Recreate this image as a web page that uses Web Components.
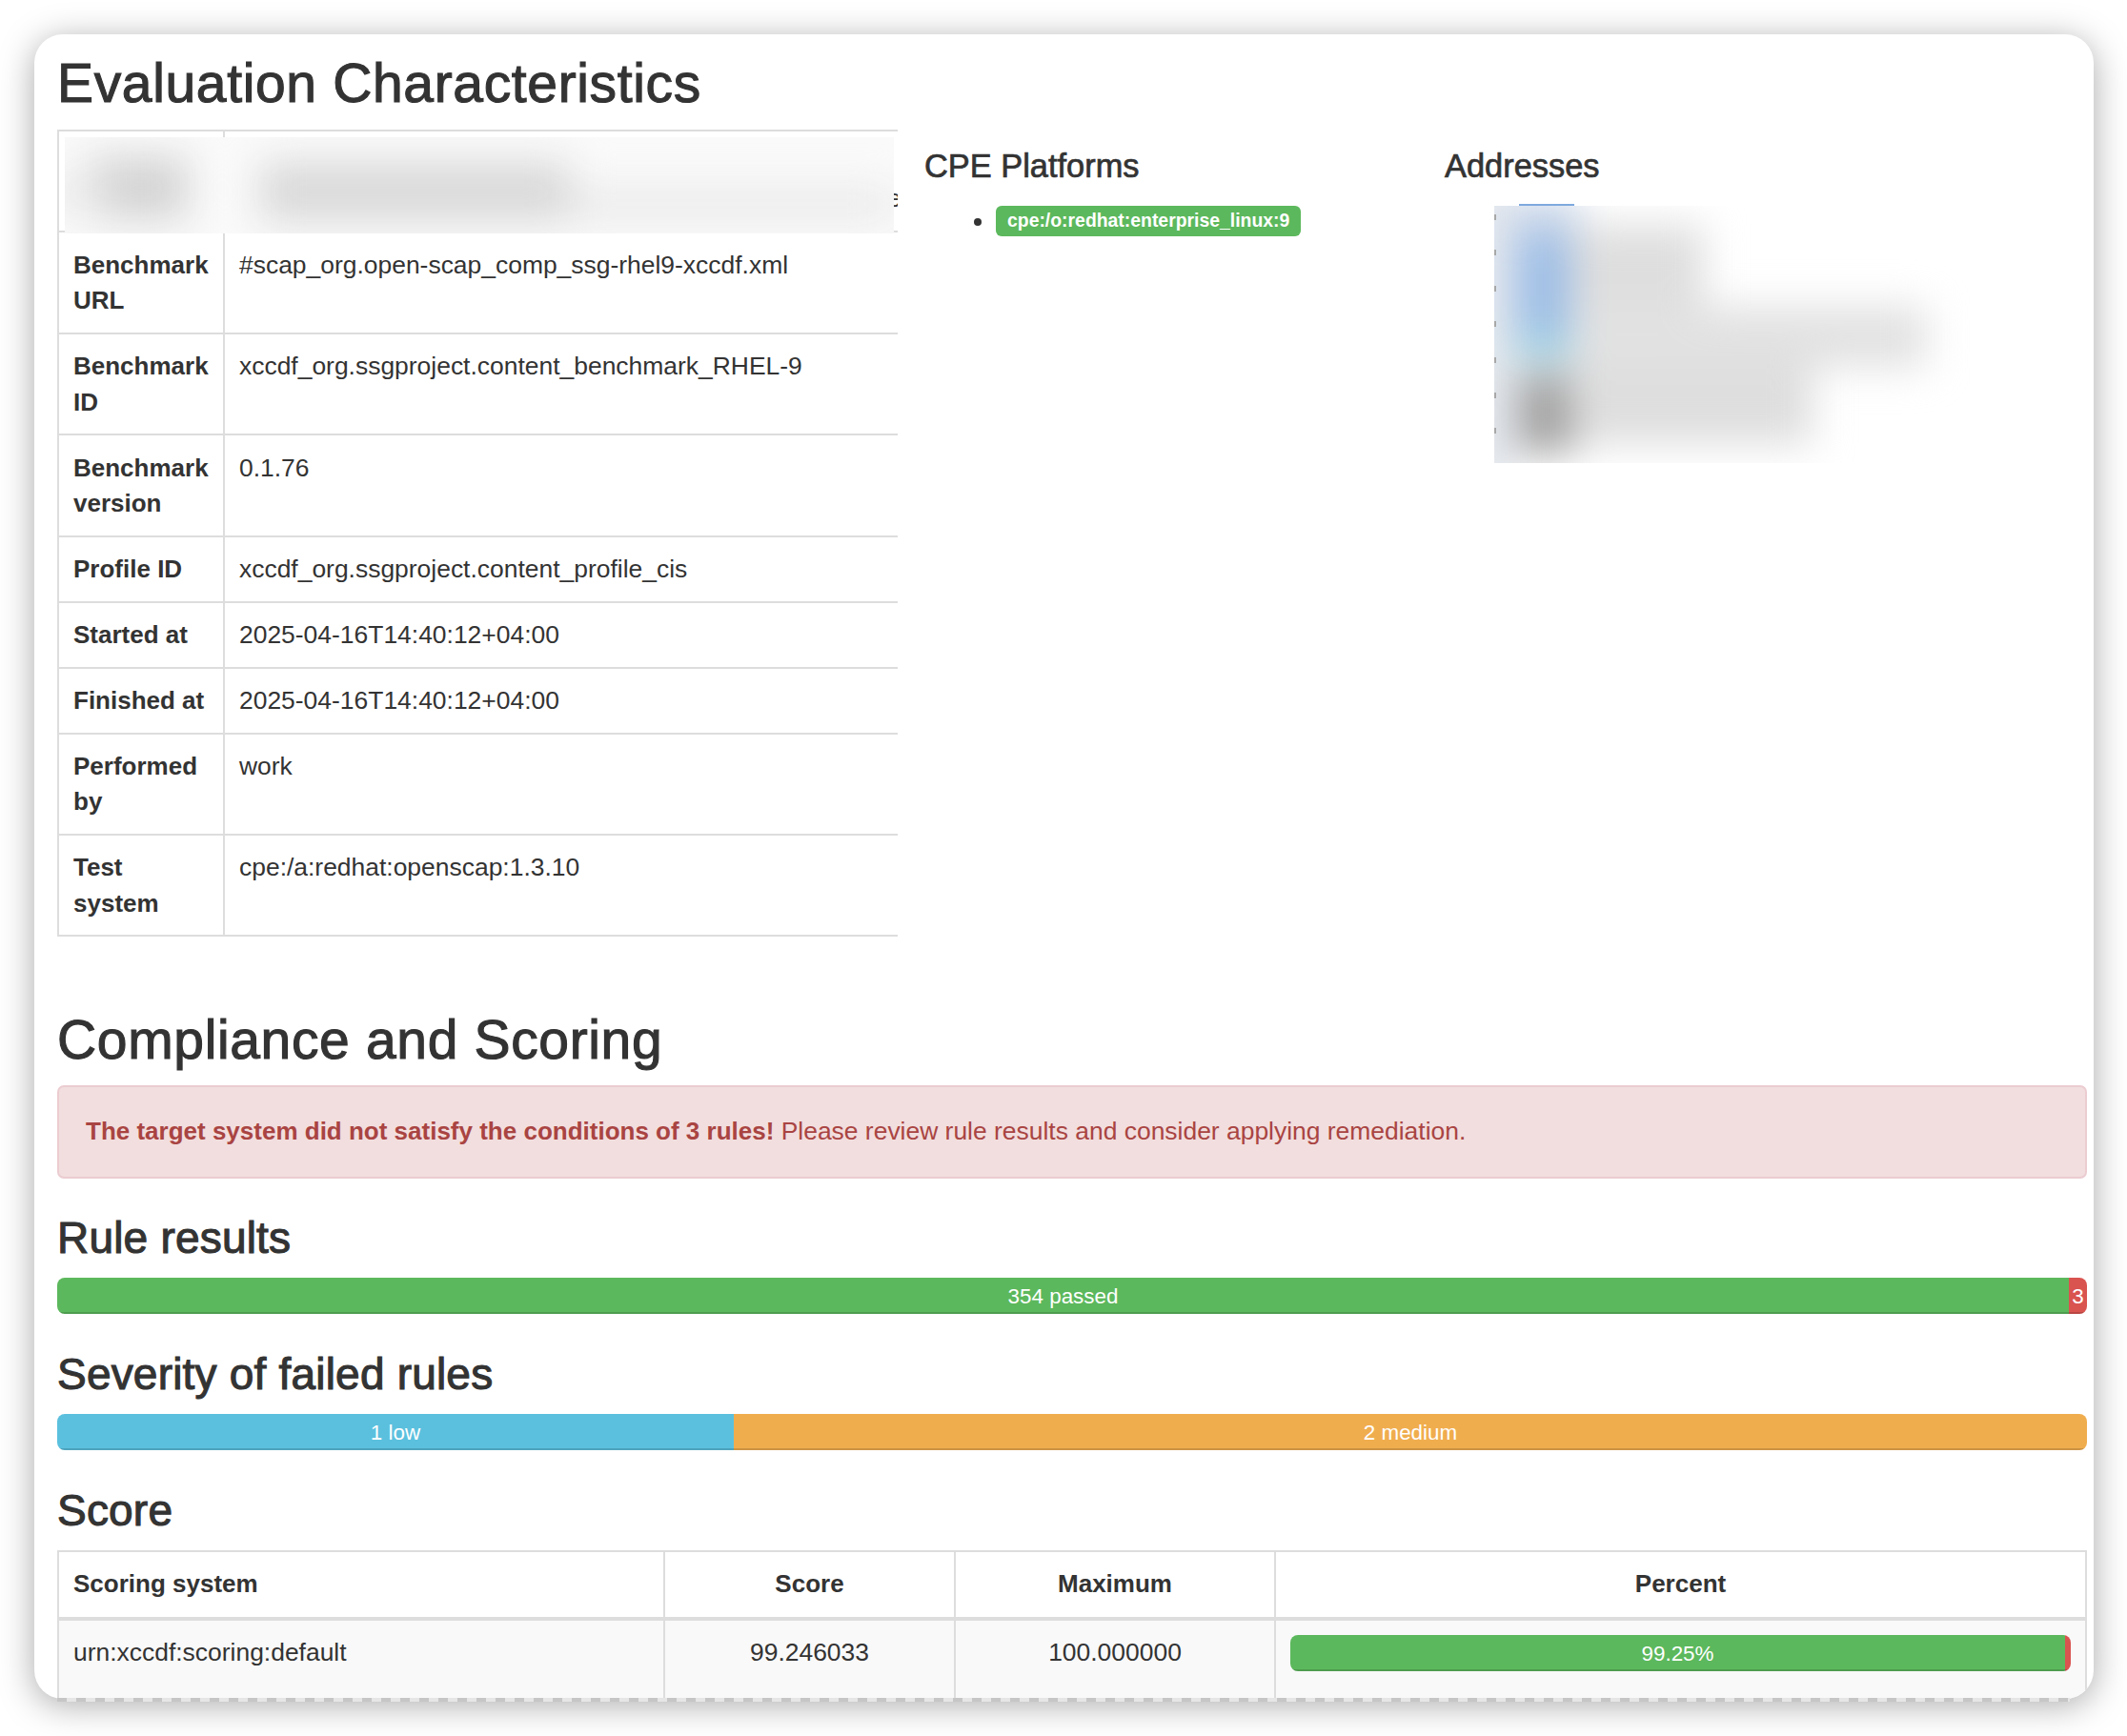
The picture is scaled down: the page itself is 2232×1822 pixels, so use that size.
<!DOCTYPE html>
<html>
<head>
<meta charset="utf-8">
<title>Evaluation report</title>
<style>
    html { background: #fff; }
    html, body { margin: 0; height: 1822px; overflow: hidden; }
    body { font-family: "Liberation Sans", Arial, sans-serif; font-size: 26.45px; line-height: 37.4px; color: #333; }
</style>
</head>
<body>

<report-card>
    <section-row>
        <div slot="heading"><report-heading level="1">Evaluation Characteristics</report-heading></div>
        <info-table slot="left">
            <info-row label="&nbsp;" blurred>&nbsp;<br>&nbsp;</info-row>
            <info-row label="Benchmark URL">#scap_org.open-scap_comp_ssg-rhel9-xccdf.xml</info-row>
            <info-row label="Benchmark ID">xccdf_org.ssgproject.content_benchmark_RHEL-9</info-row>
            <info-row label="Benchmark version">0.1.76</info-row>
            <info-row label="Profile ID">xccdf_org.ssgproject.content_profile_cis</info-row>
            <info-row label="Started at">2025-04-16T14:40:12+04:00</info-row>
            <info-row label="Finished at">2025-04-16T14:40:12+04:00</info-row>
            <info-row label="Performed by">work</info-row>
            <info-row label="Test system">cpe:/a:redhat:openscap:1.3.10</info-row>
        </info-table>
        <cpe-panel slot="middle"></cpe-panel>
        <address-panel slot="right"></address-panel>
    </section-row>

    <report-heading level="1" style="--top:77px">Compliance and Scoring</report-heading>
    <alert-box><b>The target system did not satisfy the conditions of 3 rules!</b> Please review rule results and consider applying remediation.</alert-box>

    <report-heading level="2" style="--top:37px">Rule results</report-heading>
    <progress-bar parts="success:1 354 passed;danger:0 3" style="--top:17px"></progress-bar>

    <report-heading level="2" style="--top:38px">Severity of failed rules</report-heading>
    <progress-bar parts="info:1 1 low;warning:2 2 medium" style="--top:17px"></progress-bar>

    <report-heading level="2" style="--top:38px">Score</report-heading>
    <score-table></score-table>
</report-card>

<script>
class ReportCard extends HTMLElement {
    connectedCallback() {
        const shadowRoot = this.attachShadow({mode: 'open'});
        shadowRoot.innerHTML = `
            <style>
                :host {
                    display: block;
                    position: relative;
                    margin: 36px 35px 0 36px;
                    height: 1747px;
                    background: #fff;
                    border-radius: 30px;
                    box-shadow: 0 6px 36px rgba(0,0,0,.34);
                }
                #clip {
                    box-sizing: border-box;
                    height: 100%;
                    padding: 0 7px 0 24px;
                    border-radius: 30px;
                    overflow: hidden;
                }
                #tear {
                    position: absolute;
                    left: 24px; width: 2112px; bottom: -3px;
                    height: 4px;
                    background: repeating-linear-gradient(90deg, #c6c6c6 0 10px, #e6e6e6 10px 20px);
                }
            </style>
            <div id="clip"><slot></slot></div>
            <div id="tear"></div>
        `;
    }
}

class ReportHeading extends HTMLElement {
    connectedCallback() {
        const shadowRoot = this.attachShadow({mode: 'open'});
        shadowRoot.innerHTML = `
            <style>
                :host {
                    display: block;
                    margin-top: var(--top, 0);
                    font-weight: 400;
                    -webkit-text-stroke: 1.1px #333;
                    color: #333;
                }
                :host([level="1"]) { font-size: 57px; line-height: 62px; letter-spacing: .65px; }
                :host([level="2"]) { font-size: 46px; line-height: 50px; letter-spacing: .2px; }
                :host([level="3"]) { font-size: 34.4px; line-height: 37px; -webkit-text-stroke: .7px #333; }
            </style>
            <slot></slot>
        `;
    }
}

class SectionRow extends HTMLElement {
    connectedCallback() {
        const shadowRoot = this.attachShadow({mode: 'open'});
        shadowRoot.innerHTML = `
            <style>
                :host { display: block; padding-top: 20px; }
                #cols { display: flex; margin-top: 18px; }
                #left { width: 882px; overflow: hidden; flex: none; }
                #middle { width: 546px; margin-left: 28px; flex: none; }
                #right { flex: 1; }
            </style>
            <slot name="heading"></slot>
            <div id="cols">
                <div id="left"><slot name="left"></slot></div>
                <div id="middle"><slot name="middle"></slot></div>
                <div id="right"><slot name="right"></slot></div>
            </div>
        `;
    }
}

class InfoTable extends HTMLElement {
    connectedCallback() {
        const shadowRoot = this.attachShadow({mode: 'open'});
        shadowRoot.innerHTML = `
            <style>
                :host {
                    display: block;
                    width: 1000px;
                    border-top: 2px solid #ddd;
                    border-left: 2px solid #ddd;
                }
            </style>
            <slot></slot>
        `;
    }
}

class InfoRow extends HTMLElement {
    connectedCallback() {
        const shadowRoot = this.attachShadow({mode: 'open'});
        const patch = this.hasAttribute('blurred') ? `
            <blur-patch style="left:6px;top:6px;width:870px;height:101px;--blur:20px" blobs="24 20 105 66 #d4d4d4;205 26 325 62 #d9d9d9;530 55 340 30 #e8e8e8;-20 40 60 40 #ececec"></blur-patch>
            <span id="stub">e</span>` : '';
        shadowRoot.innerHTML = `
            <style>
                :host {
                    display: flex;
                    position: relative;
                    border-bottom: 2px solid #ddd;
                }
                #label {
                    box-sizing: border-box;
                    width: 174px;
                    flex: none;
                    padding: 15.4px 15px 14.2px;
                    font-weight: bold;
                    font-size: 26px;
                    border-right: 2px solid #ddd;
                }
                #value { padding: 15.4px 15px 14.2px; }
                #stub { position: absolute; left: 869px; top: 52px; }
            </style>
            <div id="label">${this.getAttribute('label')}</div>
            <div id="value"><slot></slot></div>
            ${patch}
        `;
    }
}

class BlurPatch extends HTMLElement {
    connectedCallback() {
        const blobs = (this.getAttribute('blobs') || '').split(';').map(b => {
            const [x, y, w, h, c] = b.trim().split(' ');
            return `<i style="left:${x}px;top:${y}px;width:${w}px;height:${h}px;background:${c}"></i>`;
        }).join('');
        const shadowRoot = this.attachShadow({mode: 'open'});
        shadowRoot.innerHTML = `
            <style>
                :host {
                    display: block;
                    position: absolute;
                    overflow: hidden;
                    background: #fafafa;
                    z-index: 1;
                }
                #inner { position: absolute; inset: 0; filter: blur(var(--blur, 14px)); }
                i { position: absolute; display: block; }
            </style>
            <div id="inner">${blobs}</div>
        `;
    }
}

class CpePanel extends HTMLElement {
    connectedCallback() {
        const shadowRoot = this.attachShadow({mode: 'open'});
        shadowRoot.innerHTML = `
            <style>
                :host { display: block; padding-top: 19.5px; }
                ul { margin: 23.5px 0 0; padding: 0 0 0 75px; display: block; }
                li { line-height: 32px; }
                li::marker { font-size: 26px; }
                span {
                    display: inline-block;
                    height: 32px;
                    line-height: 31px;
                    padding: 0 12px;
                    border-radius: 6px;
                    background: #5cb85c;
                    color: #fff;
                    font-size: 19.4px;
                    font-weight: bold;
                    vertical-align: top;
                }
            </style>
            <report-heading level="3">CPE Platforms</report-heading>
            <ul><li><span>cpe:/o:redhat:enterprise_linux:9</span></li></ul>
        `;
    }
}

class AddressPanel extends HTMLElement {
    connectedCallback() {
        const shadowRoot = this.attachShadow({mode: 'open'});
        shadowRoot.innerHTML = `
            <style>
                :host { display: block; padding-top: 19.5px; }
                #list { position: relative; height: 270px; margin-top: 23.5px; margin-left: 52px; }
                #bar { position: absolute; left: 26px; top: -2px; width: 58px; height: 2px; background: #7fa9de; }
                #ticks {
                    position: absolute; left: 0; top: 9px; width: 2px; height: 240px; z-index: 2;
                    background: repeating-linear-gradient(180deg, #a8a8a8 0 6px, transparent 6px 37.4px);
                }
            </style>
            <report-heading level="3">Addresses</report-heading>
            <div id="list">
                <blur-patch style="left:0;top:0;width:500px;height:270px;background:#fff;--blur:20px"
                    blobs="-30 -30 50 340 #e2e6ec;20 -10 70 40 #ccd8ea;22 30 66 110 #9cbde6;22 130 66 35 #a2d0e2;24 175 60 85 #a2a2a2;80 20 140 210 #dedede;84 105 370 65 #e2e2e2;84 165 250 85 #dedede"></blur-patch>
                <div id="ticks"></div>
                <div id="bar"></div>
            </div>
        `;
    }
}

class AlertBox extends HTMLElement {
    connectedCallback() {
        const shadowRoot = this.attachShadow({mode: 'open'});
        shadowRoot.innerHTML = `
            <style>
                :host {
                    display: block;
                    margin-top: 17px;
                    padding: 28px;
                    border: 2px solid #ebccd1;
                    border-radius: 7px;
                    background: #f2dede;
                    color: #a94442;
                }
                ::slotted(b) { font-size: 26px; }
            </style>
            <slot></slot>
        `;
    }
}

class ProgressBar extends HTMLElement {
    connectedCallback() {
        // parts: "kind:grow label;kind:grow label", grow 0 is the narrow end piece
        const parts = this.getAttribute('parts').split(';').map(p => {
            const m = p.match(/^(\w+):([\d.]+) (.*)$/);
            const style = m[2] === '0' ? 'flex:none;width:var(--narrow, 19px)' : `flex:${m[2]} 1 0`;
            return `<div class="${m[1]}" style="${style}">${m[3]}</div>`;
        }).join('');
        const shadowRoot = this.attachShadow({mode: 'open'});
        shadowRoot.innerHTML = `
            <style>
                :host {
                    display: flex;
                    margin-top: var(--top, 0);
                    height: 38px;
                    border-radius: 8px;
                    overflow: hidden;
                    font-size: 22.4px;
                    line-height: 39px;
                    color: #fff;
                    text-align: center;
                }
                div { box-shadow: inset 0 -2px 0 rgba(0,0,0,.15); overflow: hidden; }
                .success { background: #5cb85c; }
                .danger { background: #d9534f; }
                .info { background: #5bc0de; }
                .warning { background: #f0ad4e; }
            </style>
            ${parts}
        `;
    }
}

class ScoreTable extends HTMLElement {
    connectedCallback() {
        const shadowRoot = this.attachShadow({mode: 'open'});
        shadowRoot.innerHTML = `
            <style>
                :host {
                    display: grid;
                    grid-template-columns: 636px 305px 336px 1fr;
                    margin-top: 17.5px;
                    border: solid #ddd;
                    border-width: 2px 2px 0 2px;
                    box-sizing: border-box;
                }
                .cell { padding: 15px; text-align: center; border-right: 2px solid #ddd; }
                .last { border-right: 0; }
                .first { text-align: left; }
                .head { font-weight: bold; font-size: 26px; border-bottom: 4px solid #ddd; }
                .body { background: #f9f9f9; height: 120px; box-sizing: border-box; }
                progress-bar { --narrow: 6px; }
            </style>
            <div class="cell head first">Scoring system</div>
            <div class="cell head">Score</div>
            <div class="cell head">Maximum</div>
            <div class="cell head last">Percent</div>
            <div class="cell body first">urn:xccdf:scoring:default</div>
            <div class="cell body">99.246033</div>
            <div class="cell body">100.000000</div>
            <div class="cell body last"><progress-bar parts="success:1 99.25%;danger:0 "></progress-bar></div>
        `;
    }
}

try {
    customElements.define('report-card', ReportCard);
    customElements.define('report-heading', ReportHeading);
    customElements.define('section-row', SectionRow);
    customElements.define('info-table', InfoTable);
    customElements.define('info-row', InfoRow);
    customElements.define('blur-patch', BlurPatch);
    customElements.define('cpe-panel', CpePanel);
    customElements.define('address-panel', AddressPanel);
    customElements.define('alert-box', AlertBox);
    customElements.define('progress-bar', ProgressBar);
    customElements.define('score-table', ScoreTable);
} catch (err) {
    const d = document.createElement('div');
    d.textContent = 'Something went wrong';
    document.body.appendChild(d);
}
</script>
</body>
</html>
